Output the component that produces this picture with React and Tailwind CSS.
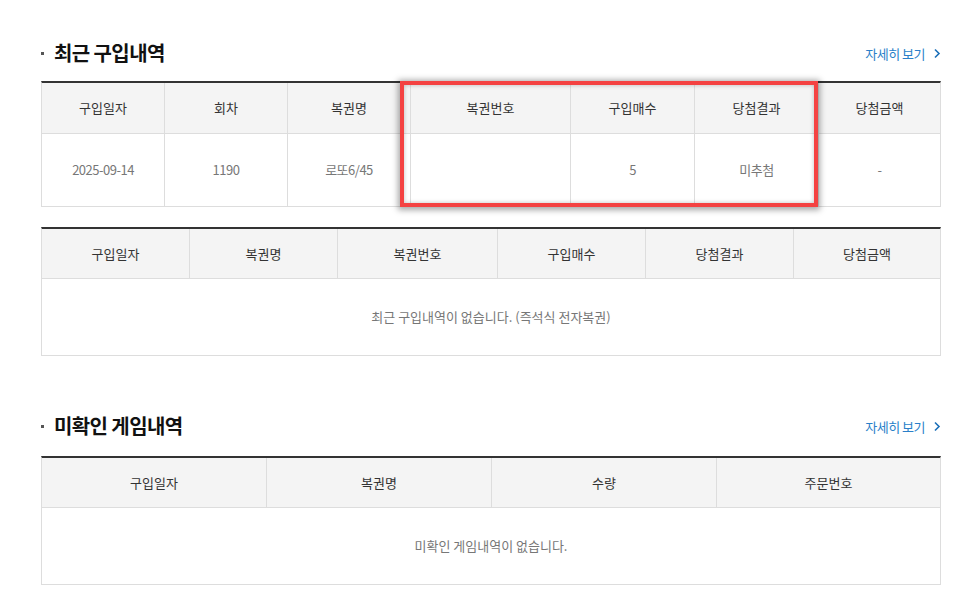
import React from "react";

const font = { fontFamily: '"Noto Sans CJK KR", "Noto Sans", sans-serif' };

function Title({ text, className }) {
  return (
    <div className={`flex items-center justify-between ${className}`}>
      <div className="flex items-center">
        <span className="w-[3px] h-[3px] bg-[#555] mr-[10px]" />
        <h2 className="text-[20px] font-bold text-[#111] tracking-[-0.6px] leading-none">{text}</h2>
      </div>
      <a className="flex items-center text-[13px] text-[#2a7fc9] tracking-[-0.5px] leading-none">
        자세히 보기
        <svg width="8" height="11" viewBox="0 0 8 11" className="ml-[8px]">
          <path d="M2 1.5 L6 5.5 L2 9.5" fill="none" stroke="#1b6fb8" strokeWidth="1.6" />
        </svg>
      </a>
    </div>
  );
}

function Table({ cols, headers, body, headH }) {
  return (
    <div className="border-t-2 border-t-[#333] border-x border-b border-[#ddd]">
      <div className={`grid ${cols} bg-[#f4f4f4] border-b border-[#ddd] ${headH}`}>
        {headers.map((h, i) => (
          <div
            key={i}
            className={`flex items-center justify-center text-[13px] text-[#333] ${i > 0 ? "border-l border-[#ddd]" : ""}`}
          >
            {h}
          </div>
        ))}
      </div>
      {body}
    </div>
  );
}

export default function App() {
  const c1 = "grid-cols-[122px_123px_123px_160px_124px_124px_1fr]";
  const row1 = ["2025-09-14", "1190", "로또6/45", "", "5", "미추첨", "-"];
  return (
    <div className="w-[977px] h-[612px] bg-white overflow-hidden" style={font}>
      <div className="ml-[41px] w-[900px] pt-[43px]">
        <Title text="최근 구입내역" className="h-[20px] mb-[18px]" />
        <div className="relative">
          <Table
            cols={c1}
            headH="h-[51px]"
            headers={["구입일자", "회차", "복권명", "복권번호", "구입매수", "당첨결과", "당첨금액"]}
            body={
              <div className={`grid ${c1} h-[72px]`}>
                {row1.map((v, i) => (
                  <div
                    key={i}
                    className={`flex items-center justify-center text-[13px] text-[#777] tracking-[-0.5px] ${i > 0 ? "border-l border-[#ddd]" : ""}`}
                  >
                    {v}
                  </div>
                ))}
              </div>
            }
          />
          <div className="absolute left-[359px] top-0 w-[418px] h-[126px] border-[4px] border-[#f44242] shadow-[0_1px_6px_2px_rgba(0,0,0,0.35),inset_0_0_4px_rgba(0,0,0,0.25)] pointer-events-none" />
        </div>

        <div className="mt-[20px]">
          <Table
            cols="grid-cols-[147px_148px_160px_148px_148px_1fr]"
            headH="h-[50px]"
            headers={["구입일자", "복권명", "복권번호", "구입매수", "당첨결과", "당첨금액"]}
            body={
              <div className="h-[76px] flex items-center justify-center text-[13px] text-[#777]">
                최근 구입내역이 없습니다. (즉석식 전자복권)
              </div>
            }
          />
        </div>

        <Title text="미확인 게임내역" className="h-[20px] mt-[60px] mb-[20px]" />
        <Table
          cols="grid-cols-[224px_225px_225px_1fr]"
          headH="h-[50px]"
          headers={["구입일자", "복권명", "수량", "주문번호"]}
          body={
            <div className="h-[76px] flex items-center justify-center text-[13px] text-[#777]">
              미확인 게임내역이 없습니다.
            </div>
          }
        />
      </div>
    </div>
  );
}
